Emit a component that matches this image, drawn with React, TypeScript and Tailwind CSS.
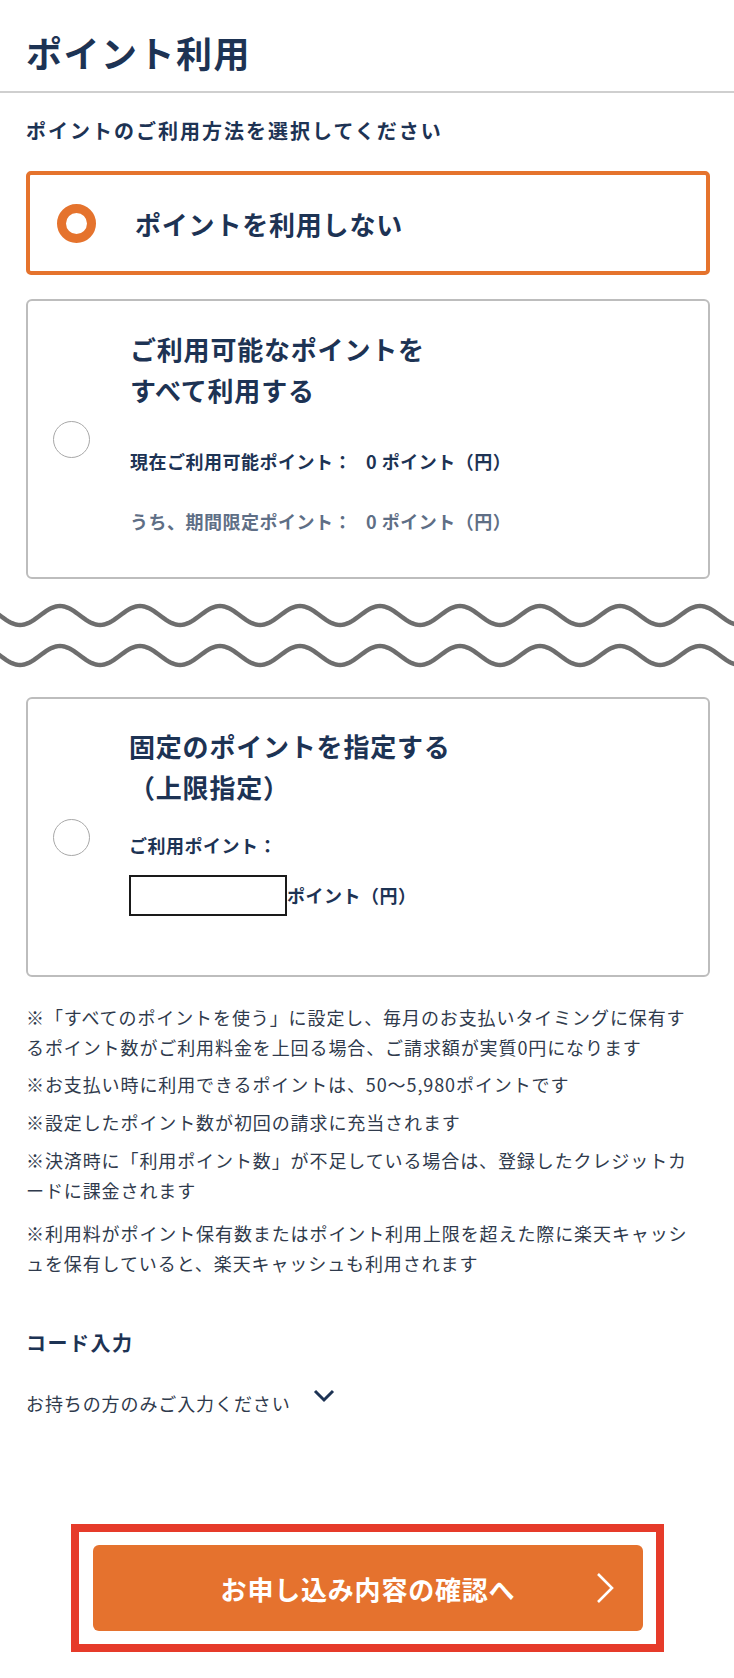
import { Fragment } from "react";

const NAVY = "text-[#1d3354]";

function wavePath(center: number) {
  const pts: string[] = [];
  for (let x = -4; x <= 740; x += 2) {
    const y = center - 9.5 * Math.cos((2 * Math.PI * (x - 60)) / 80);
    pts.push(`${x === -4 ? "M" : "L"}${x} ${y.toFixed(2)}`);
  }
  return pts.join(" ");
}

function Radio({ checked }: { checked?: boolean }) {
  if (checked) {
    return <span className="block h-[39px] w-[39px] shrink-0 rounded-full border-[9px] border-[#e5732d] bg-white" />;
  }
  return <span className="block h-[37px] w-[37px] shrink-0 rounded-full border-[1.5px] border-[#a8a8a8] bg-white" />;
}

const notes: { lines: string[]; gap: string }[] = [
  {
    lines: [
      "※「すべてのポイントを使う」に設定し、毎月のお支払いタイミングに保有す",
      "るポイント数がご利用料金を上回る場合、ご請求額が実質0円になります",
    ],
    gap: "",
  },
  { lines: ["※お支払い時に利用できるポイントは、50～5,980ポイントです"], gap: "mt-[7px]" },
  { lines: ["※設定したポイント数が初回の請求に充当されます"], gap: "mt-[8px]" },
  {
    lines: [
      "※決済時に「利用ポイント数」が不足している場合は、登録したクレジットカ",
      "ードに課金されます",
    ],
    gap: "mt-[8px]",
  },
  {
    lines: [
      "※利用料がポイント保有数またはポイント利用上限を超えた際に楽天キャッシ",
      "ュを保有していると、楽天キャッシュも利用されます",
    ],
    gap: "mt-[13px]",
  },
];

export default function App() {
  return (
    <div className="min-h-[1678px] w-[734px] bg-white font-['Noto_Sans_CJK_JP','Noto_Sans',sans-serif]">
      {/* Header */}
      <header className="border-b-2 border-[#cfcfcf] pb-[19px] pl-[26px] pt-[32px]">
        <h1 className={`text-[36px] font-bold leading-[40px] tracking-[1.5px] ${NAVY}`}>ポイント利用</h1>
      </header>

      <main className="pl-[26px] pr-[24px]">
        <p className={`mt-[24px] text-[20px] font-bold leading-[28px] tracking-[2px] ${NAVY}`}>
          ポイントのご利用方法を選択してください
        </p>

        {/* Option 1: selected */}
        <div className="mt-[26px] flex h-[104px] items-center rounded-[5px] border-4 border-[#e5732d] pl-[27px]">
          <Radio checked />
          <span className={`ml-[39px] text-[26px] font-bold tracking-[0.8px] ${NAVY}`}>ポイントを利用しない</span>
        </div>

        {/* Option 2 */}
        <div className="mt-[24px] flex h-[280px] items-center rounded-[6px] border-2 border-[#bdbdbd] pl-[25px]">
          <Radio />
          <div className="ml-[40px] self-start pt-[27px]">
            <p className={`text-[26px] font-bold leading-[41px] tracking-[0.8px] ${NAVY}`}>
              ご利用可能なポイントを
              <br />
              すべて利用する
            </p>
            <div className="mt-[36px] grid grid-cols-[236px_auto] gap-y-[30px] text-[18px] font-bold leading-[30px] tracking-[0.5px]">
              <span className={NAVY}>現在ご利用可能ポイント：</span>
              <span className={NAVY}>0 ポイント（円）</span>
              <span className="text-[#5f6f86]">うち、期間限定ポイント：</span>
              <span className="text-[#5f6f86]">0 ポイント（円）</span>
            </div>
          </div>
        </div>
      </main>

      {/* Wave break */}
      <svg className="mt-[16px] block" width="734" height="80" viewBox="0 0 734 80">
        <path d={wavePath(20.5)} fill="none" stroke="#6e6e6e" strokeWidth="4.5" />
        <path d={wavePath(60.5)} fill="none" stroke="#6e6e6e" strokeWidth="4.5" />
      </svg>

      <div className="pl-[26px] pr-[24px]">
        {/* Option 3 */}
        <div className="mt-[22px] flex h-[280px] items-center rounded-[6px] border-2 border-[#bdbdbd] pl-[25px]">
          <Radio />
          <div className="ml-[39px] self-start pt-[26px]">
            <p className={`text-[26px] font-bold leading-[41px] tracking-[0.8px] ${NAVY}`}>
              固定のポイントを指定する
              <br />
              （上限指定）
            </p>
            <p className={`mt-[23px] text-[18px] font-bold leading-[30px] tracking-[0.5px] ${NAVY}`}>ご利用ポイント：</p>
            <div className="mt-[15px] flex items-center">
              <input
                type="text"
                aria-label="ご利用ポイント"
                className="h-[41px] w-[158px] border-2 border-[#1a1a1a] bg-white px-2 text-[18px]"
              />
              <span className={`text-[18px] font-bold tracking-[0.5px] ${NAVY}`}>ポイント（円）</span>
            </div>
          </div>
        </div>

        {/* Notes */}
        <div className="mt-[25px] text-[18px] leading-[30px] tracking-[0.9px] text-[#2f3a4c]">
          {notes.map((n, i) => (
            <p key={i} className={n.gap}>
              {n.lines.map((l, j) => (
                <Fragment key={j}>
                  {j > 0 && <br />}
                  {l}
                </Fragment>
              ))}
            </p>
          ))}
        </div>

        {/* Code input */}
        <h2 className={`mt-[50px] text-[20px] font-bold leading-[30px] tracking-[1.5px] ${NAVY}`}>コード入力</h2>
        <div className="mt-[30px] flex items-start">
          <span className="text-[18px] leading-[30px] tracking-[0.9px] text-[#2f3a4c]">お持ちの方のみご入力ください</span>
          <svg className="ml-[22px] mt-[1px]" width="22" height="14" viewBox="0 0 22 14">
            <polyline points="2,2 11,11 20,2" fill="none" stroke="#1d3354" strokeWidth="3" />
          </svg>
        </div>
      </div>

      {/* Submit */}
      <div className="mt-[106px] flex justify-center pl-[1px]">
        <div className="border-8 border-[#e63b2a] pb-[13px] pl-[14px] pr-[13px] pt-[13px]">
          <button
            type="button"
            className="relative flex h-[86px] w-[550px] items-center justify-center rounded-[6px] bg-[#e5722e] text-[26px] font-bold tracking-[0.8px] text-white"
          >
            お申し込み内容の確認へ
            <svg className="absolute right-[28px] top-[27px]" width="20" height="32" viewBox="0 0 20 32">
              <polyline points="3,2 17,16 3,30" fill="none" stroke="#ffffff" strokeWidth="2.6" />
            </svg>
          </button>
        </div>
      </div>
    </div>
  );
}
